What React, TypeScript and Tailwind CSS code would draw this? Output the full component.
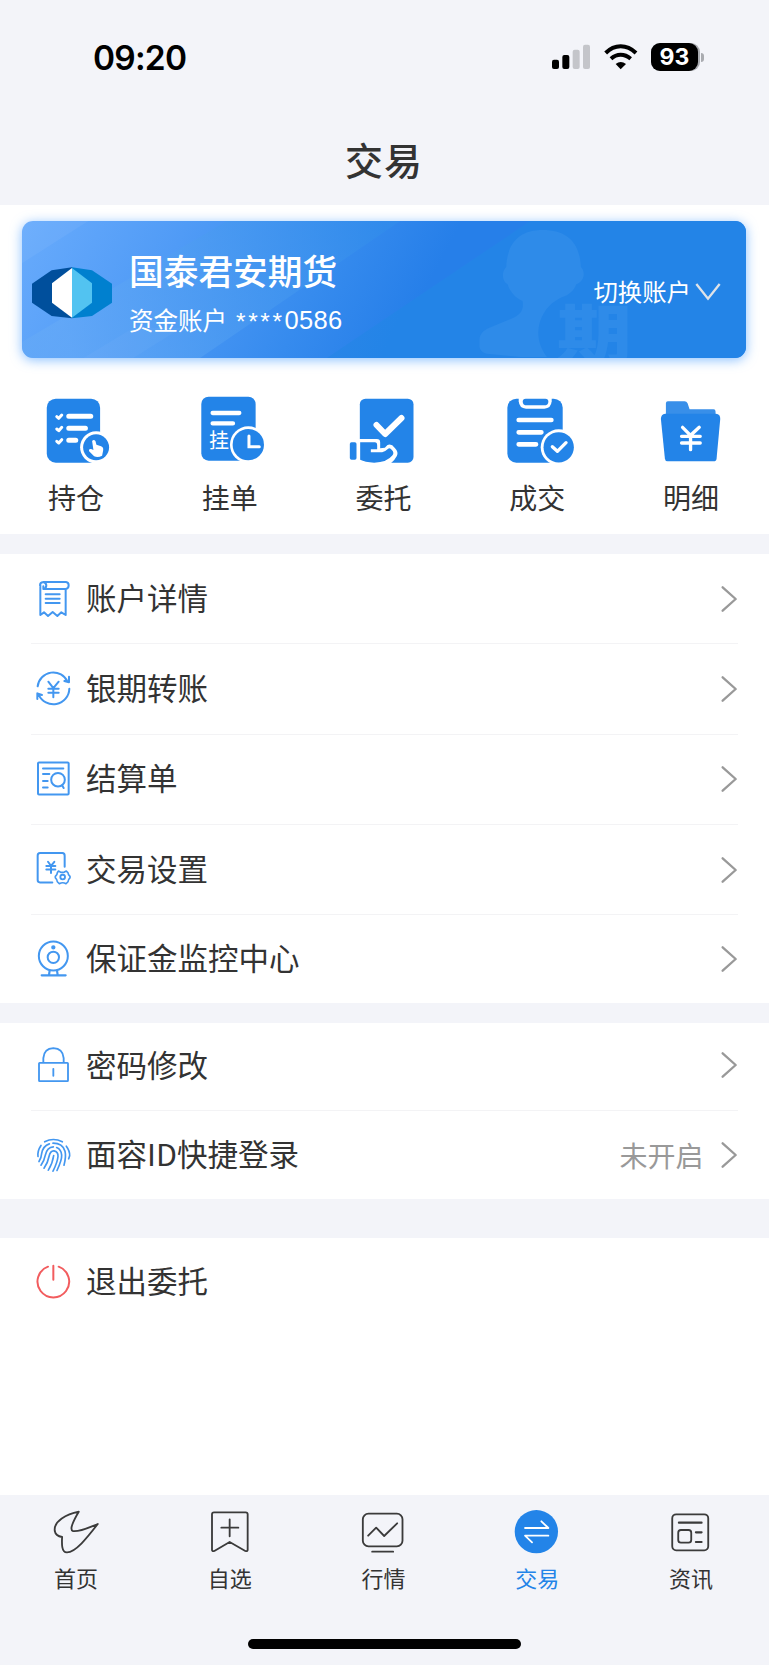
import React from "react";

const BLUE = "#2384e8";
const LINE = "#4397f0";

function SignalIcon() {
  return (
    <svg viewBox="30 36 120 90" className="h-[30px] w-[40px]">
      <rect x="33" y="89" width="21" height="28" rx="6" fill="#000" />
      <rect x="64" y="75" width="21" height="42" rx="6" fill="#000" />
      <rect x="95" y="59" width="21" height="58" rx="6" fill="#c4c5ca" />
      <rect x="126" y="44" width="21" height="73" rx="6" fill="#c4c5ca" />
    </svg>
  );
}

function WifiIcon() {
  return (
    <svg viewBox="186 36 108 90" className="h-[30px] w-[36px]" fill="none" stroke="#000">
      <path d="M194 69Q214 49 239 49Q264 49 285 69" strokeWidth="12" />
      <path d="M210 86Q223 74 239 74Q255 74 269 86" strokeWidth="12" />
      <path d="M224 102Q239 90 255 102L239 118Z" fill="#000" stroke="none" />
    </svg>
  );
}

function Logo() {
  return (
    <svg viewBox="93 183 246 162" className="h-[54px] w-[82px]">
      <path d="M216 187L155 196L96 236V293L155 333L216 340Z" fill="#004f9c" />
      <path d="M216 187L276 196L336 236V293L276 333L216 340Z" fill="#0080cf" />
      <path d="M216 189L156 235V293L216 338Z" fill="#fff" />
      <path d="M216 189L276 235V293L216 338Z" fill="#52c3f1" />
    </svg>
  );
}

function CardArt() {
  return (
    <svg viewBox="66 49 2171 409" preserveAspectRatio="none" className="absolute inset-0 h-full w-full rounded-[11px]">
      <defs>
        <linearGradient id="base" gradientUnits="userSpaceOnUse" x1="66" y1="49" x2="1090" y2="600">
          <stop offset="0" stopColor="#68abfc" />
          <stop offset="0.38" stopColor="#509bf6" />
          <stop offset="0.75" stopColor="#368bee" />
          <stop offset="1" stopColor="#267fe9" />
        </linearGradient>
        <linearGradient id="band" gradientUnits="userSpaceOnUse" x1="200" y1="400" x2="1150" y2="60">
          <stop offset="0" stopColor="#64a9f7" stopOpacity="0.7" />
          <stop offset="1" stopColor="#318ceb" stopOpacity="0.75" />
        </linearGradient>
        <linearGradient id="tail" gradientUnits="userSpaceOnUse" x1="1000" y1="250" x2="1400" y2="420">
          <stop offset="0" stopColor="#2b86e8" />
          <stop offset="0.5" stopColor="#2384e7" />
        </linearGradient>
      </defs>
      <rect x="66" y="49" width="2171" height="409" fill="url(#base)" />
      <path d="M66 49H265L66 175Z" fill="#fff" fillOpacity="0.05" />
      <path d="M66 410L680 49H1200L600 458H66Z" fill="url(#band)" />
      <path d="M250 458L400 368L545 368L400 458Z" fill="#fff" fillOpacity="0.03" />
      <path d="M980 458L1590 49H2237V458Z" fill="url(#tail)" />
      <path
        d="M1627 76C1560 76 1521 112 1518 186C1504 198 1504 228 1522 238C1530 262 1545 278 1567 288C1571 312 1563 328 1535 340L1462 370Q1440 382 1438 400V425Q1440 441 1460 445L1560 455H1640C1607 412 1607 362 1632 322C1650 294 1675 280 1700 271C1715 262 1724 250 1728 238C1755 228 1755 198 1742 186C1738 112 1700 76 1627 76Z"
        fill="#2e8be9"
      />
      <text
        x="1670"
        y="0"
        fontSize="224"
        fontWeight="900"
        fill="#2e8be9"
        className="font-['Noto_Sans_CJK_SC',sans-serif]"
        transform="translate(0 455) scale(1 0.83)"
      >
        期
      </text>
    </svg>
  );
}

function HoldingIcon() {
  return (
    <svg viewBox="50.7 36 240 228" className="h-[76px] w-[80px]">
      <rect x="80" y="56" width="160" height="192" rx="27" fill={BLUE} />
      <g stroke="#fff" strokeWidth="15" strokeLinecap="round">
        <path d="M146 109H212M146 145H196M146 181H167" />
      </g>
      <path d="M110 110L116 115L125 105M110 147L116 152L125 142M110 184L116 189L125 179" fill="none" stroke="#fff" strokeWidth="9" strokeLinecap="round" strokeLinejoin="round" />
      <circle cx="228" cy="202" r="48" fill="#fff" />
      <circle cx="228" cy="202" r="39" fill={BLUE} />
      <path d="M216 183Q221 177 226 183L229 194L243 199Q251 202 249 212L246 227Q234 234 222 229L207 214Q205 206 213 207L220 210Z" fill="#fff" />
    </svg>
  );
}

function PendingIcon() {
  return (
    <svg viewBox="512.1 36 240 228" className="h-[76px] w-[80px]">
      <rect x="543" y="50" width="163" height="192" rx="22" fill={BLUE} />
      <path d="M577 99H657M577 130H638" stroke="#fff" strokeWidth="13" strokeLinecap="round" />
      <text x="566" y="205" fontSize="60" fill="#fff" className="font-['Noto_Sans_CJK_SC',sans-serif]">
        挂
      </text>
      <circle cx="684" cy="194" r="55" fill="#fff" />
      <circle cx="684" cy="194" r="47" fill={BLUE} />
      <path d="M686 168V200H717" stroke="#fff" strokeWidth="9" fill="none" strokeLinecap="round" />
    </svg>
  );
}

function EntrustIcon() {
  return (
    <svg viewBox="43.5 36 240 228" className="h-[76px] w-[80px]">
      <rect x="91" y="56" width="161" height="192" rx="17" fill={BLUE} />
      <path d="M84 177H142Q152 177 152 187V205L166 203L174 195Q186 190 196 204Q208 216 202 228Q196 240 184 250H84Z" fill="#fff" />
      <path d="M92 187H136Q143 187 143 196V208H124V217H158Q168 214 175 207Q181 202 187 210Q195 218 189 226Q172 248 134 248Q106 246 92 239Z" fill={BLUE} />
      <path d="M141 135L167 162L216 114" fill="none" stroke="#fff" strokeWidth="18" strokeLinecap="round" strokeLinejoin="round" />
      <rect x="61" y="187" width="20" height="52" rx="5" fill={BLUE} />
    </svg>
  );
}

function DealIcon() {
  return (
    <svg viewBox="504.9 36 240 228" className="h-[76px] w-[80px]">
      <rect x="533" y="56" width="166" height="192" rx="27" fill={BLUE} />
      <path d="M567 48H666V64Q664 86 644 86H589Q569 86 567 64Z" fill="#fff" />
      <path d="M588 56H647Q656 56 656 65Q656 76 643 76H592Q579 76 579 65Q579 56 588 56Z" fill={BLUE} />
      <path d="M567 120H665M567 157H635M567 193H619" stroke="#fff" strokeWidth="14" strokeLinecap="round" />
      <circle cx="687" cy="202" r="54" fill="#fff" />
      <circle cx="687" cy="202" r="45.5" fill={BLUE} />
      <path d="M668 200L683 214L709 188" fill="none" stroke="#fff" strokeWidth="10" strokeLinecap="round" strokeLinejoin="round" />
    </svg>
  );
}

function DetailIcon() {
  return (
    <svg viewBox="966.3 36 240 228" className="h-[76px] w-[80px]">
      <path d="M1008 112V70Q1008 64 1014 64H1064Q1070 64 1073 70L1079 88H1151Q1157 88 1157 95V112Z" fill="#388fe9" />
      <path d="M1006 101H1158Q1172 102 1171 117L1160 236Q1159 244 1151 244H1013Q1006 244 1005 236L993 117Q993 102 1006 101Z" fill={BLUE} />
      <path d="M1058 142L1082 166L1108 142M1082 166V209M1055 169H1111M1055 189H1111" fill="none" stroke="#fff" strokeWidth="10" strokeLinecap="round" />
    </svg>
  );
}

interface LineIconProps {
  viewBox: string;
  color?: string;
  width?: number;
  children: React.ReactNode;
}

function LineIcon({ viewBox, color = LINE, width = 6, children }: LineIconProps) {
  return (
    <svg viewBox={viewBox} className="h-[44px] w-[40px] shrink-0" fill="none" stroke={color} strokeWidth={width} strokeLinecap="round" strokeLinejoin="round">
      {children}
    </svg>
  );
}

const accountIcon = (
  <LineIcon viewBox="39 80 120 132">
    <path d="M61 105V194L72 186L84 197L98 185L112 197L124 186L137 194V116M70 95H138Q146 96 146 105Q146 115 137 116H70M70 95Q60 96 60 105M70 95Q79 97 79 106Q78 115 70 116V108" />
    <path d="M77 132H119M77 145H119M77 158H119" />
  </LineIcon>
);
const transferIcon = (
  <LineIcon viewBox="39 350.9 120 132">
    <path d="M53 409A47 47 0 0 1 143 396M147 380V397L133 393M148 416A48 48 0 0 1 56 434M52 447V430L66 435" />
    <path d="M85 395L100 414L116 395M100 414V442M85 416H116M85 428H116" />
  </LineIcon>
);
const statementIcon = (
  <LineIcon viewBox="39 621.8 120 132">
    <rect x="54" y="638" width="92" height="96" rx="3" />
    <path d="M69 656H130M69 673H88M69 694H83M69 713H83M127 708L131 715" />
    <circle cx="114" cy="690" r="20.5" />
  </LineIcon>
);
const settingIcon = (
  <LineIcon viewBox="39 82.7 120 132">
    <path d="M97 186H60Q53 186 53 179V106Q53 98 60 98H127Q134 98 134 106V139" />
    <path d="M84 124L93 136L103 124M93 136V158M79 137H106M79 147H106" />
    <path d="M115 152L121 155Q127 157 133 155L139 152L144 157Q144 162 150 168V172Q144 177 144 184L138 190Q128 184 118 190L112 184Q112 177 106 172V168Q112 162 112 157Z" strokeWidth="5" />
    <circle cx="128" cy="170" r="7" strokeWidth="5.5" />
  </LineIcon>
);
const monitorIcon = (
  <LineIcon viewBox="39 352 120 132">
    <circle cx="100" cy="409" r="43.5" />
    <circle cx="100" cy="413" r="17" />
    <circle cx="100" cy="383" r="3.5" fill={LINE} />
    <path d="M89 452L87 466M111 452L113 466M65 467H137" strokeWidth="6.5" />
  </LineIcon>
);
const lockIcon = (
  <LineIcon viewBox="39 100.5 120 132" width={5.5}>
    <rect x="57" y="160" width="87" height="55" rx="2" />
    <path d="M70 158V146Q72 117 100 116Q129 117 131 146V158M100 178V199" />
  </LineIcon>
);
const fingerprintIcon = (
  <LineIcon viewBox="39 369.5 120 132" width={5}>
    <path d="M74 396Q100 382 127 396M139 409Q150 424 149 438L146 447M63 407Q52 423 54 440" />
    <path d="M57 455Q64 444 65 431Q69 408 88 402M99 400Q128 400 135 424Q139 440 132 466" />
    <path d="M63 466Q73 452 76 436Q81 412 100 411M110 413Q124 419 125 436Q126 450 111 482" />
    <path d="M72 475Q84 458 87 440Q91 422 102 423Q115 426 114 440Q112 458 99 484M85 481Q98 460 101 437" />
  </LineIcon>
);
const powerIcon = (
  <LineIcon viewBox="39 750 120 132" color="#f25c5e">
    <path d="M84 770A47.5 47.5 0 1 0 116 770M100 767V809" />
  </LineIcon>
);

function Chevron() {
  return (
    <svg viewBox="0 0 48 78" className="mr-[1.5px] h-[26px] w-[16px] shrink-0" fill="none" stroke="#999" strokeWidth="7" strokeLinecap="round" strokeLinejoin="round">
      <path d="M5 4L44 39L5 74" />
    </svg>
  );
}

interface RowProps {
  icon: React.ReactNode;
  label: string;
  note?: string;
  arrow?: boolean;
  size: string;
}

function Row({ icon, label, note, arrow = true, size }: RowProps) {
  return (
    <div className={"mx-[31px] box-border flex items-center border-[#f3f3f5] pl-[2px] " + size}>
      {icon}
      <span className="ml-[13px] pb-[3px] text-[30.5px] leading-none whitespace-nowrap text-[#333]">{label}</span>
      <span className="ml-auto flex items-center gap-[17px]">
        {note && <span className="text-[28px] leading-none text-[#999]">{note}</span>}
        {arrow && <Chevron />}
      </span>
    </div>
  );
}

const quick = [
  { label: "持仓", icon: <HoldingIcon /> },
  { label: "挂单", icon: <PendingIcon /> },
  { label: "委托", icon: <EntrustIcon /> },
  { label: "成交", icon: <DealIcon /> },
  { label: "明细", icon: <DetailIcon /> },
];

interface TabIconProps {
  viewBox: string;
  children: React.ReactNode;
}

function TabIcon({ viewBox, children }: TabIconProps) {
  return (
    <svg viewBox={viewBox} className="h-[48px] w-[56px]" fill="none" stroke="#3b3b3b" strokeWidth="5.5" strokeLinecap="round" strokeLinejoin="round">
      {children}
    </svg>
  );
}

const tabs = [
  {
    label: "首页",
    icon: (
      <TabIcon viewBox="146.7 54 168 144">
        <path d="M236 65C200 72 160 93 164 123C166 134 174 139 186 141C185 160 184 187 200 187C226 188 262 142 293 102C262 114 240 126 218 123C207 119 221 90 236 65Z" />
      </TabIcon>
    ),
  },
  {
    label: "自选",
    icon: (
      <TabIcon viewBox="608 54 168 144">
        <path d="M641 67H736Q742 67 742 73V180Q741 185 735 183L688 156L642 183Q636 185 635 180V73Q635 67 641 67ZM663 113H714M688 88V139" />
      </TabIcon>
    ),
  },
  {
    label: "行情",
    icon: (
      <TabIcon viewBox="1069.5 54 168 144">
        <rect x="1090" y="71" width="119" height="98" rx="17" />
        <path d="M1106 137L1130 113L1154 138L1193 100M1118 185H1181" />
      </TabIcon>
    ),
  },
  {
    label: "交易",
    active: true,
    icon: (
      <TabIcon viewBox="423.9 54 168 144">
        <circle cx="503" cy="125" r="65" fill={BLUE} stroke="none" />
        <path d="M469 114H539L518 94M539 137H469L490 157" stroke="#fff" />
      </TabIcon>
    ),
  },
  {
    label: "资讯",
    icon: (
      <TabIcon viewBox="885.3 54 168 144">
        <rect x="910" y="73" width="108" height="108" rx="12" />
        <rect x="928" y="120" width="39" height="38" rx="8" />
        <path d="M930 98H998M981 127H998M981 156H998" strokeWidth="6.5" />
      </TabIcon>
    ),
  },
];

export default function App() {
  return (
    <div className="flex h-[1665px] w-[769px] flex-col overflow-hidden bg-[#f3f4f9] font-['Noto_Sans_CJK_SC',sans-serif]">
      <header className="h-[205px] shrink-0">
        <div className="flex h-[114px] items-center justify-between pr-[65px] pl-[93px]">
          <span className="pt-[3px] font-[Inter,sans-serif] text-[33.5px] leading-none font-semibold tracking-[-0.8px] text-black">09:20</span>
          <div className="flex items-center">
            <SignalIcon />
            <span className="ml-[12px] flex">
              <WifiIcon />
            </span>
            <span className="ml-[12px] flex h-[28px] w-[49px] items-center rounded-[9px] bg-[#a9abb0]">
              <span className="flex h-[28px] w-[47px] items-center justify-center rounded-[9px] bg-black font-[Inter,sans-serif] text-[23px] leading-none font-bold text-white">
                93
              </span>
            </span>
            <span className="ml-[1px] h-[9px] w-[3px] rounded-r-full bg-[#a9abb0]" />
          </div>
        </div>
        <h1 className="mt-[25px] pr-[1px] text-center text-[38px] leading-[40px] font-medium tracking-[1px] text-[#333]">交易</h1>
      </header>

      <section className="h-[329px] shrink-0 bg-white px-[22px] pt-[16px]">
        <div className="relative flex h-[137px] w-[724px] items-center rounded-[11px] shadow-[0_2px_12px_rgba(60,150,255,0.6)]">
          <CardArt />
          <div className="relative flex w-full items-center pr-[24px] pl-[9px]">
            <span className="mt-[6px] flex">
              <Logo />
            </span>
            <div className="ml-[16px] flex flex-col pt-[7px] text-white">
              <span className="text-[34.7px] leading-[40px] font-medium">国泰君安期货</span>
              <span className="mt-[15px] flex text-[24.5px] leading-[30px]">
                <span>资金账户</span>
                <span className="ml-[9px] pt-[2px] font-['Liberation_Sans',sans-serif] tracking-[2.6px]">****</span>
                <span className="font-['Liberation_Sans',sans-serif] text-[25.5px] tracking-[0.3px]">0586</span>
              </span>
            </div>
            <span className="ml-auto pt-[4px] text-[24.4px] leading-none text-white">切换账户</span>
            <svg viewBox="0 0 84 60" className="mt-[5px] ml-[3px] h-[20px] w-[28px]" fill="none" stroke="#dfe3e8" strokeWidth="7">
              <path d="M7 6L42 50L77 6" />
            </svg>
          </div>
        </div>
        <nav className="-mx-[22px] mt-[34px] flex">
          {quick.map((q) => (
            <div key={q.label} className="flex flex-1 flex-col items-center">
              {q.icon}
              <span className="mt-[15px] pr-[2px] text-[28px] leading-[28px] text-[#333]">{q.label}</span>
            </div>
          ))}
        </nav>
      </section>

      <section className="mt-[20px] h-[448.7px] shrink-0 bg-white">
        <Row icon={accountIcon} label="账户详情" size="h-[90.3px] border-b" />
        <Row icon={transferIcon} label="银期转账" size="h-[90.3px] border-b" />
        <Row icon={statementIcon} label="结算单" size="h-[90.3px] border-b" />
        <Row icon={settingIcon} label="交易设置" size="h-[90.3px] border-b" />
        <Row icon={monitorIcon} label="保证金监控中心" size="h-[88px]" />
      </section>

      <section className="mt-[20.3px] h-[176.3px] shrink-0 bg-white">
        <Row icon={lockIcon} label="密码修改" size="h-[88px] border-b pb-[2px]" />
        <Row icon={fingerprintIcon} label="面容ID快捷登录" note="未开启" size="h-[88px]" />
      </section>

      <section className="mt-[38.7px] h-[257px] shrink-0 bg-white">
        <Row icon={powerIcon} label="退出委托" arrow={false} size="h-[88px]" />
      </section>

      <footer className="flex flex-1 flex-col items-center pt-[13px]">
        <nav className="flex w-full">
          {tabs.map((t) => (
            <div key={t.label} className="flex flex-1 flex-col items-center">
              {t.icon}
              <span className={"mt-[10px] pr-[2px] text-[22px] leading-[22px] " + (t.active ? "text-[#2384e8]" : "text-[#333]")}>{t.label}</span>
            </div>
          ))}
        </nav>
        <span className="mt-[51px] h-[10px] w-[273px] rounded-full bg-black" />
      </footer>
    </div>
  );
}
